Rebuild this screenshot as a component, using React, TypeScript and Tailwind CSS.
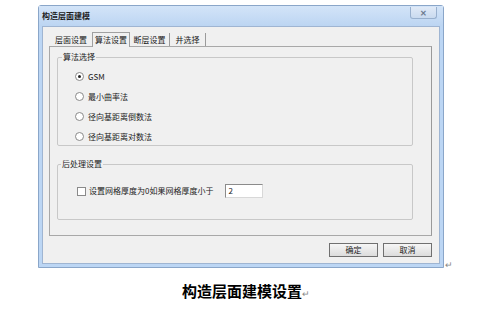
import React from "react";

const FONT = { fontFamily: '"Noto Sans CJK SC", "Liberation Sans", sans-serif' };

function Radio({ checked, label }: { checked?: boolean; label: string }) {
  return (
    <div className="flex h-[13px] items-center gap-[4px]">
      <span className="flex h-[9px] w-[9px] items-center justify-center rounded-full border border-[#8a8a8a] bg-white">
        {checked && <span className="h-[3px] w-[3px] rounded-full bg-[#222]" />}
      </span>
      <span className="text-[8px] leading-none text-[#222]">{label}</span>
    </div>
  );
}

export default function App() {
  return (
    <div className="relative h-[314px] w-[486px] overflow-hidden bg-white" style={FONT}>
      <div className="ml-[38px] mt-[5px] flex h-[263px] w-[406px] flex-col rounded-t-[3px] border border-[#8aa6c9] bg-[#bcd6f4]">
        {/* title bar */}
        <div className="flex h-[20px] items-center justify-between bg-gradient-to-b from-[#d3e4f8] to-[#bcd5f2] pl-[3px] pr-[6px]">
          <span className="text-[8px] font-bold text-[#1e1e1e]">构造层面建模</span>
          <div className="mb-[6px] flex h-[12px] w-[27px] items-center justify-center rounded-b-[3px] border border-t-0 border-[#98b0ce] bg-gradient-to-b from-[#e0eaf7] to-[#c9daef]">
            <span className="text-[8px] font-bold leading-none text-[#6d7c90]">✕</span>
          </div>
        </div>
        {/* client */}
        <div className="mx-[3px] mb-[3px] flex flex-1 flex-col border border-[#9fb5d2] bg-[#f0f0f0]">
          {/* tabs */}
          <div className="ml-[7px] mt-[4px] flex h-[15px] items-end">
            <div className="flex h-[13px] w-[42px] items-center justify-center text-[8px] text-[#222]">层面设置</div>
            <div className="relative z-10 -mb-[1px] flex h-[15px] w-[38px] items-center justify-center border border-b-0 border-[#a0a0a0] bg-[#f0f0f0] text-[8px] text-[#222]">
              算法设置
            </div>
            <div className="flex h-[13px] w-[40px] items-center justify-center border-r border-[#9a9a9a] text-[8px] text-[#222]">断层设置</div>
            <div className="flex h-[13px] w-[36px] items-center justify-center border-r border-[#9a9a9a] text-[8px] text-[#222]">井选择</div>
          </div>
          {/* tab panel */}
          <div className="ml-[6px] mr-[7px] flex h-[190px] flex-col border border-[#a8a8a8] border-r-[#9a9a9a] pl-[7px] pr-[18px] pt-[6px]">
            <fieldset className="h-[93px] rounded-[2px] border border-[#c8c8c8] px-0 pb-0 pl-[17px] pt-[9px]">
              <legend className="ml-[-13px] px-[1px] text-[8px] leading-none text-[#222]">算法选择</legend>
              <div className="flex flex-col gap-[7px]">
                <Radio checked label="GSM" />
                <Radio label="最小曲率法" />
                <Radio label="径向基距离倒数法" />
                <Radio label="径向基距离对数法" />
              </div>
            </fieldset>
            <fieldset className="mt-[14px] h-[60px] rounded-[2px] border border-[#c8c8c8] pl-[19px] pt-[16px]">
              <legend className="ml-[-16px] px-[1px] text-[8px] leading-none text-[#222]">后处理设置</legend>
              <div className="flex items-center">
                <span className="h-[9px] w-[9px] border border-[#8a8a8a] bg-white" />
                <span className="ml-[3px] text-[8px] text-[#222]">设置网格厚度为0如果网格厚度小于</span>
                <div className="ml-[12px] flex h-[14px] w-[38px] items-center border border-[#8b8b8b] border-b-[#d8d8d8] border-r-[#d8d8d8] bg-white pl-[2px] text-[8px] text-[#222]">
                  2
                </div>
              </div>
            </fieldset>
          </div>
          {/* buttons */}
          <div className="mr-[7px] mt-[7px] flex justify-end gap-[5px]">
            <div className="flex h-[14px] w-[49px] items-center justify-center border border-[#707070] bg-gradient-to-b from-[#f6f6f6] to-[#dcdcdc] text-[8px] text-[#222]">
              确定
            </div>
            <div className="flex h-[14px] w-[49px] items-center justify-center border border-[#707070] bg-gradient-to-b from-[#f6f6f6] to-[#dcdcdc] text-[8px] text-[#222]">
              取消
            </div>
          </div>
        </div>
      </div>
      <span className="absolute left-[445px] top-[258px] text-[9px] text-[#888]">↵</span>
      {/* caption */}
      <div className="mt-[12px] flex items-baseline justify-center pl-[6px]">
        <span className="text-[15px] font-bold text-black">构造层面建模设置</span>
        <span className="text-[9px] text-[#888]">↵</span>
      </div>
    </div>
  );
}
